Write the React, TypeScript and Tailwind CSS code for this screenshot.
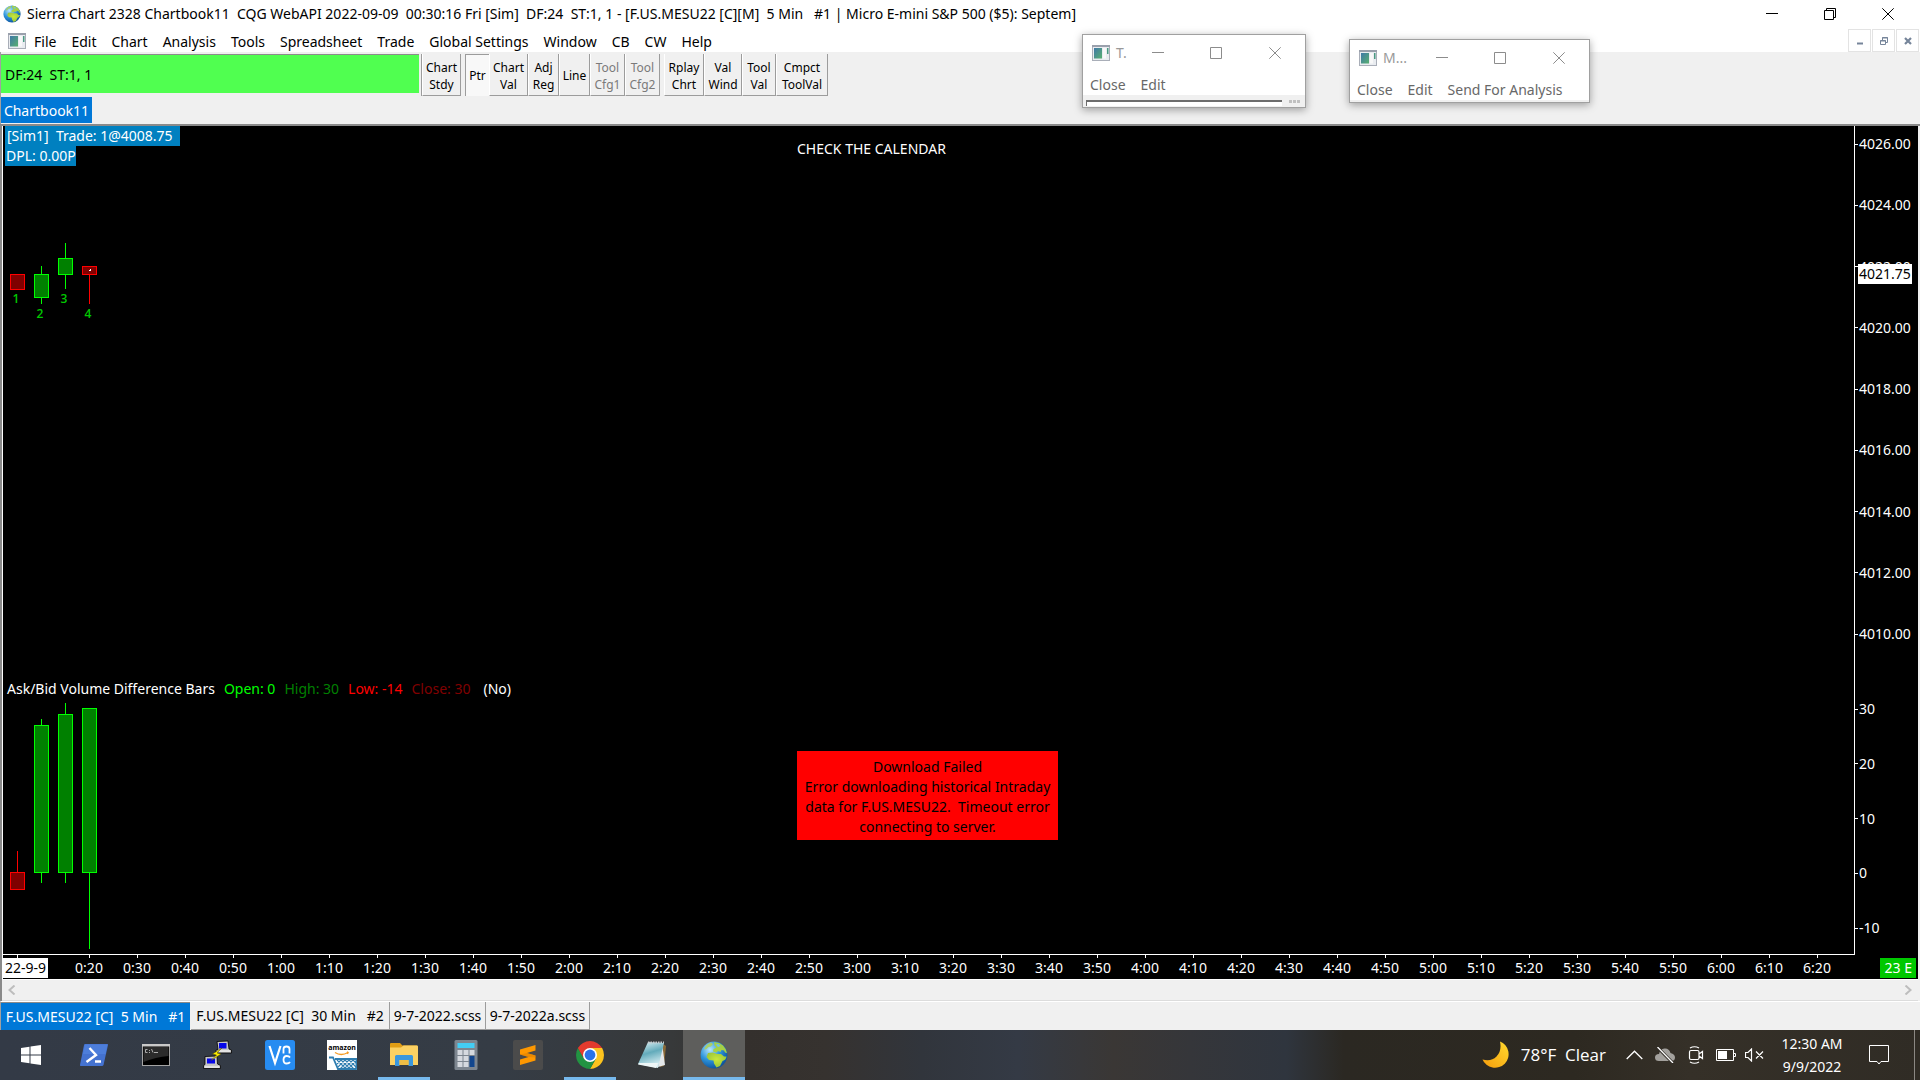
import React from "react";

type Bar = { x: number; top: number; bottom: number; high: number; low: number; up: boolean };

const priceBars: Bar[] = [
  { x: 14, top: 148, bottom: 163, high: 148, low: 163, up: false },
  { x: 38, top: 148, bottom: 171, high: 140, low: 177, up: true },
  { x: 62, top: 132, bottom: 148, high: 117, low: 162, up: true },
  { x: 86, top: 140, bottom: 148, high: 140, low: 177, up: false },
];

const volumeBars: Bar[] = [
  { x: 14, top: 746, bottom: 763, high: 725, low: 763, up: false },
  { x: 38, top: 599, bottom: 746, high: 593, low: 756, up: true },
  { x: 62, top: 588, bottom: 746, high: 577, low: 756, up: true },
  { x: 86, top: 582, bottom: 746, high: 582, low: 822, up: true },
];

const barNumbers = [
  { x: 13, y: 177, n: "1" },
  { x: 37, y: 192, n: "2" },
  { x: 61, y: 177, n: "3" },
  { x: 85, y: 192, n: "4" },
];

const menus = ["File", "Edit", "Chart", "Analysis", "Tools", "Spreadsheet", "Trade", "Global Settings", "Window", "CB", "CW", "Help"];

const prices = ["4026.00", "4024.00", "4022.00", "4020.00", "4018.00", "4016.00", "4014.00", "4012.00", "4010.00"];
const volumes = ["30", "20", "10", "0", "-10"];

const times = Array.from({ length: 37 }, (_, i) => {
  const minutes = 20 + i * 10;
  return `${Math.floor(minutes / 60)}:${String(minutes % 60).padStart(2, "0")}`;
});

function Globe({ className }: { className: string }) {
  return (
    <svg viewBox="0 0 28 28" className={className} aria-hidden="true">
      <defs>
        <radialGradient id="sea" cx="0.35" cy="0.3" r="0.75">
          <stop offset="0" stopColor="#b9e6fb" />
          <stop offset="0.5" stopColor="#2f96dc" />
          <stop offset="1" stopColor="#0b4f9a" />
        </radialGradient>
        <radialGradient id="land" cx="0.5" cy="0.45" r="0.65">
          <stop offset="0" stopColor="#c9e83a" />
          <stop offset="1" stopColor="#93bf3a" />
        </radialGradient>
      </defs>
      <circle cx="14" cy="14" r="13.4" fill="url(#sea)" />
      <path d="M8 3L11 1.500L13 3L11 5.500L8.500 6L6.500 8L4 8.500Q5 5 8 3Z" fill="#a9cf6a" />
      <path d="M14 1.200Q19 0.800 23 4.500Q26.500 8 27 12L25 11.500L24 9.500L21.500 9L20.500 11L18 10L16.500 11.500L13 10.500L13.500 8L16.500 6.500L14.500 4.500Z" fill="#a6d045" />
      <path d="M8 12L13 11.500L17 13L21 13L24 15.500L26.500 15.500Q26 19 22.500 20L20 25L16.500 26.500L14 22.500L13.500 19.500L9 19L6.500 16Z" fill="url(#land)" />
      <path d="M16 3.500L18.500 3L20.500 5L18 6Z" fill="#6fc0e6" />
    </svg>
  );
}

function ChartIcon() {
  return (
    <svg viewBox="0 0 18 16" className="h-4 w-[18px] shrink-0" aria-hidden="true">
      <defs>
        <linearGradient id="pane" x1="0" y1="0" x2="1" y2="1">
          <stop offset="0" stopColor="#3f78a8" />
          <stop offset="1" stopColor="#58b070" />
        </linearGradient>
      </defs>
      <rect x="0.5" y="0.5" width="17" height="15" fill="#e9ecf0" stroke="#a9aeb8" />
      <rect x="0" y="0" width="18" height="2" fill="#9aa0ac" />
      <rect x="2" y="3" width="8" height="10.500" fill="url(#pane)" />
      <rect x="11" y="3" width="3" height="10.500" fill="#f8f8f8" />
      <rect x="15" y="3" width="1.500" height="6" fill="#4b9a82" />
    </svg>
  );
}

function Minus({ className }: { className: string }) {
  return (
    <svg viewBox="0 0 12 12" className={className} aria-hidden="true">
      <path d="M0 5.500H12" stroke="currentColor" fill="none" />
    </svg>
  );
}
function Square({ className }: { className: string }) {
  return (
    <svg viewBox="0 0 12 12" className={className} aria-hidden="true">
      <path d="M0.500 0.500H11.500V11.500H0.500Z" stroke="currentColor" fill="none" />
    </svg>
  );
}
function Restore({ className }: { className: string }) {
  return (
    <svg viewBox="0 0 12 12" className={className} aria-hidden="true">
      <path d="M0.500 2.500H9.500V11.500H0.500ZM2.500 2.500V0.500H11.500V9.500H9.500" stroke="currentColor" fill="none" />
    </svg>
  );
}
function Cross({ className }: { className: string }) {
  return (
    <svg viewBox="0 0 12 12" className={className} aria-hidden="true">
      <path d="M0.300 0.300L11.700 11.700M11.700 0.300L0.300 11.700" stroke="currentColor" fill="none" />
    </svg>
  );
}

function ToolButton({ lines, width, disabled }: { lines: string[]; width: string; disabled?: boolean }) {
  return (
    <button
      type="button"
      disabled={disabled}
      className={`${width} flex shrink-0 flex-col items-center justify-center whitespace-nowrap border-r border-b border-l border-r-[#9c9c9c] border-b-[#9c9c9c] border-l-white bg-[#f0f0f0] pt-[2px] text-xs leading-[17px] ${disabled ? "text-[#7a7a7a]" : "text-black"}`}
    >
      {lines.map((l) => (
        <span key={l}>{l}</span>
      ))}
    </button>
  );
}

function ToolWindow({ title, menu, place, children }: { title: string; menu: string[]; place: string; children?: React.ReactNode }) {
  return (
    <section aria-label={title} className={`${place} absolute z-10 flex flex-col border border-[#a0a0a0] bg-white text-[#686868] shadow-[0_2px_8px_rgba(0,0,0,0.35)]`}>
      <div className="flex h-9 items-center pl-[9px] text-[#8c8c8c]">
        <ChartIcon />
        <span className="ml-[6px] w-[28px] text-[#999]">{title}</span>
        <div className="ml-auto flex">
          <button type="button" aria-label="Minimize" className="flex w-[58px] justify-center"><Minus className="size-3" /></button>
          <button type="button" aria-label="Maximize" className="flex w-[58px] justify-center"><Square className="size-3" /></button>
          <button type="button" aria-label="Close window" className="flex w-[60px] justify-center"><Cross className="size-3" /></button>
        </div>
      </div>
      <div className="flex h-6 items-end gap-[15px] pl-[7px]">
        {menu.map((m) => (
          <button key={m} type="button" className="whitespace-nowrap">{m}</button>
        ))}
      </div>
      {children}
    </section>
  );
}

function Candles({ bars }: { bars: Bar[] }) {
  return (
    <>
      {bars.map((b) => (
        <g key={b.x} stroke={b.up ? "#00ff00" : "#ff0000"} fill={b.up ? "#008000" : "#800000"}>
          <path d={`M${b.x + 0.5} ${b.high}V${b.low + 1}`} />
          <rect x={b.x - 6.5} y={b.top + 0.5} width="14" height={b.bottom - b.top} />
        </g>
      ))}
    </>
  );
}

function AxisLabel({ text }: { text: string }) {
  return (
    <div className="flex h-5 items-center">
      <span className="h-px w-[3px] bg-white" />
      <span className="pl-px leading-5">{text}</span>
    </div>
  );
}

function WindowsIcon() {
  return (
    <svg viewBox="0 0 20 20" className="size-5" aria-hidden="true">
      <path d="M0 3L8.500 1.800V9.500H0ZM9.500 1.600L20 0V9.500H9.500ZM0 10.500H8.500V18.200L0 17ZM9.500 10.500H20V20L9.500 18.400Z" fill="#fff" />
    </svg>
  );
}
function PowerShellIcon() {
  return (
    <svg viewBox="0 0 28 22" className="h-[22px] w-7" aria-hidden="true">
      <path d="M5 0H27.500Q28 0 28 1L23.500 21Q23 22 22 22H0.500Q0 22 0 21L4 1Q4.300 0 5 0Z" fill="#4472d0" />
      <path d="M5 0.500H27.500L25.500 10H3Z" fill="#5487e2" opacity="0.6" />
      <path d="M9.500 4L16 11L6.500 18M15 17.500H21" fill="none" stroke="#fff" strokeWidth="2.400" />
    </svg>
  );
}
function ConsoleIcon() {
  return (
    <svg viewBox="0 0 28 22" className="h-[22px] w-7" aria-hidden="true">
      <rect x="0.500" y="0.500" width="27" height="21" fill="#000" stroke="#a4a4a4" />
      <rect x="0" y="0" width="28" height="2.500" fill="#c9c9c9" />
      <path d="M1.500 3H26.500V12Q14 13 1.500 18Z" fill="#2b2b2b" />
      <path d="M5.500 5.500H3.500V8.500H5.500M7.500 6V7M7.500 8V9M9.500 5L11 8.500M12 8.500H16" fill="none" stroke="#bbb" strokeWidth="0.900" />
    </svg>
  );
}
function PuttyIcon() {
  return (
    <svg viewBox="0 0 30 30" className="size-[30px]" aria-hidden="true">
      <g stroke="#000" strokeWidth="0.800">
        <path d="M14 1.500L25 1L26 9L28.500 10V13H13V10L15 9.500Z" fill="#c6c6c6" />
        <path d="M2 16.500L14 16L14.500 24L17.500 25.500V28.500H0.500V25.500L2 24.500Z" fill="#c6c6c6" />
      </g>
      <path d="M16 3H23.500V8.500H16ZM4 18.500H12V23.500H4Z" fill="#0707e8" />
      <path d="M15 11H27M2 27H16" stroke="#fff" />
      <path d="M19 8L9.500 14L13.500 15L8 20.500L18 14L14 13Z" fill="#ffef00" stroke="#554d00" strokeWidth="0.500" />
    </svg>
  );
}
function VncIcon() {
  return (
    <svg viewBox="0 0 30 30" className="size-[30px]" aria-hidden="true">
      <rect width="30" height="30" rx="2.500" fill="#278cf1" />
      <path d="M4.500 6L10 23L15.500 6" fill="none" stroke="#fff" strokeWidth="2.200" />
      <path d="M18.500 13.500V9Q18.500 6.500 21.500 6.500T24.500 9V13.500M25 17.500Q24 16 21.800 16Q18.500 16 18.500 19.800T21.800 23.500Q24 23.500 25 22" fill="none" stroke="#fff" strokeWidth="1.800" />
    </svg>
  );
}
function AmazonIcon() {
  return (
    <span className="relative block size-[30px] bg-white">
      <svg viewBox="0 0 30 30" className="size-[30px]" aria-hidden="true">
        <path d="M8 12.500Q14 16.500 21 12.500L20 11.800M21 12.500L20.500 14" fill="none" stroke="#f59b23" strokeWidth="1.300" />
        <path d="M2 17.500H6L11 29H29L30 19H8" fill="none" stroke="#2e7db0" strokeWidth="1.800" />
        <path d="M10 20L19 29M14 20L23 29M18 20L27 29M22 20L29 27M26 20L30 24M30 20L21 29M26 20L17 29M22 20L13 29M18 20L11 27M14 20L10 24" stroke="#2e7db0" strokeWidth="1.100" />
      </svg>
      <span className="absolute inset-x-0 top-[3px] text-center font-['Open_Sans'] text-[7px] leading-[10px] font-bold text-black">amazon</span>
    </span>
  );
}
function FolderIcon() {
  return (
    <svg viewBox="0 0 28 24" className="h-6 w-7" aria-hidden="true">
      <path d="M0 1Q0 0 1 0H10L12.500 2.500H27V8H0Z" fill="#e19e15" />
      <path d="M0 4.500H11L13.500 2.500H27Q28 2.500 28 3.500V22H0Z" fill="#fbd162" />
      <path d="M5 23V13.500Q5 12 6.500 12H21.500Q23 12 23 13.500V23H18.500V17H9.500V23Z" fill="#3a97dd" />
      <path d="M9.500 17H18.500V22H9.500Z" fill="#eebd45" />
    </svg>
  );
}
function CalculatorIcon() {
  return (
    <svg viewBox="0 0 24 30" className="h-[30px] w-6" aria-hidden="true">
      <rect x="0.500" width="23" height="30" rx="1.500" fill="#7d8690" />
      <rect x="3.500" y="3" width="17" height="5" fill="#43cdf4" />
      <path d="M3.500 10H8.500V15H3.500ZM9.500 10H14.500V15H9.500ZM15.500 10H20.500V15H15.500ZM3.500 16H8.500V21H3.500ZM9.500 16H14.500V21H9.500ZM3.500 22H8.500V27H3.500ZM9.500 22H14.500V27H9.500Z" fill="#d5d9df" />
      <rect x="15.500" y="16" width="5" height="11" fill="#12468e" />
    </svg>
  );
}
function SublimeIcon() {
  return (
    <svg viewBox="0 0 30 30" className="size-[30px]" aria-hidden="true">
      <rect width="30" height="30" rx="2" fill="#4b4b4b" />
      <path d="M7 9.500L22.500 5V10.500L14 13L22.500 15.500V20.500L7 25V19.500L15.500 17L7 14.500Z" fill="#ff9800" />
      <path d="M7 14.500L14 13L22.500 15.500V17.500L15.500 17Z" fill="#d97c00" opacity="0.500" />
    </svg>
  );
}
function ChromeIcon() {
  return (
    <svg viewBox="0 0 28 28" className="size-7" aria-hidden="true">
      <path d="M14 7H26.120A14 14 0 0 1 14 28L20 17.500Z" fill="#fcc31e" />
      <path d="M1.880 7L8 17.500L14 21L20 17.500L14 28A14 14 0 0 1 1.880 7Z" fill="#229342" />
      <path d="M1.880 7A14 14 0 0 1 26.120 7H14L8 10.500L7.900 17.400Z" fill="#e33b2e" />
      <circle cx="14" cy="14" r="7" fill="#fff" />
      <circle cx="14" cy="14" r="5.400" fill="#2a72e8" />
    </svg>
  );
}
function NotepadIcon() {
  return (
    <svg viewBox="0 0 28 28" className="size-7" aria-hidden="true">
      <defs>
        <linearGradient id="note" x1="0" y1="0" x2="0.300" y2="1">
          <stop offset="0" stopColor="#e4f4f7" />
          <stop offset="0.500" stopColor="#63abbb" />
          <stop offset="1" stopColor="#d8eef3" />
        </linearGradient>
      </defs>
      <path d="M24 2L28 5L26 25L22 26Z" fill="#8a6a38" />
      <path d="M24 2L27 24L20 26Z" fill="#e3e7ea" />
      <path d="M10 1L26 2L20 27L0 23Z" fill="url(#note)" />
      <path d="M20 22L18 27L0 23.500L1 22Z" fill="#eef6f7" />
      <path d="M10 1.500H26" stroke="#c8ccd0" strokeWidth="2" strokeDasharray="1.500 1" />
    </svg>
  );
}

const apps = [
  { name: "Start", icon: <WindowsIcon /> },
  { name: "PowerShell", icon: <PowerShellIcon /> },
  { name: "Command Prompt", icon: <ConsoleIcon /> },
  { name: "PuTTY", icon: <PuttyIcon /> },
  { name: "VNC", icon: <VncIcon /> },
  { name: "Amazon", icon: <AmazonIcon /> },
  { name: "File Explorer", icon: <FolderIcon />, open: true },
  { name: "Calculator", icon: <CalculatorIcon /> },
  { name: "Sublime Text", icon: <SublimeIcon /> },
  { name: "Chrome", icon: <ChromeIcon />, open: true },
  { name: "Notepad", icon: <NotepadIcon /> },
  { name: "Sierra Chart", icon: <Globe className="size-7" />, active: true },
];

function Taskbar() {
  return (
    <footer className="flex h-[50px] shrink-0 bg-[linear-gradient(90deg,#333a46_0%,#353c45_26%,#37393a_35%,#34302d_39%,#36322f_43%,#31353c_48%,#343a45_53%,#3a3735_58%,#35363a_62%,#2f353e_67%,#2b2822_70%,#2d2921_82%,#353028_88%,#302c25_100%)] text-white">
      <nav aria-label="Taskbar" className="flex">
        {apps.map((a) => (
          <button
            key={a.name}
            type="button"
            aria-label={a.name}
            className={`relative flex w-[62px] items-center justify-center first:mr-px ${a.active ? "bg-[#5e5e5c]" : ""}`}
          >
            {a.icon}
            {a.open && <span className="absolute inset-x-[5px] bottom-0 h-[3px] bg-[#76b9ed]" />}
            {a.active && <span className="absolute inset-x-0 bottom-0 h-[3px] bg-[#76b9ed]" />}
          </button>
        ))}
      </nav>
      <div className="ml-auto flex items-center">
        <button type="button" className="flex items-center gap-[11px] font-['Open_Sans'] text-[17px] whitespace-pre">
          <svg viewBox="0 0 28 28" className="size-7" aria-hidden="true">
            <defs>
              <linearGradient id="moon" x1="0" y1="1" x2="1" y2="0">
                <stop offset="0" stopColor="#f59c0c" />
                <stop offset="1" stopColor="#ffd92e" />
              </linearGradient>
            </defs>
            <path d="M18 0.500A13.600 13.600 0 1 1 0.500 18.500Q9 21 14.500 15.500T18 0.500Z" fill="url(#moon)" />
          </svg>
          <span>78°F  Clear</span>
        </button>
        <div className="ml-5 flex items-center">
          <button type="button" aria-label="Show hidden icons">
            <svg viewBox="0 0 17 10" className="h-[10px] w-[17px]" aria-hidden="true"><path d="M0.700 9L8.500 1.200L16.300 9" fill="none" stroke="#fff" strokeWidth="1.300" /></svg>
          </button>
          <button type="button" aria-label="OneDrive" className="ml-3">
            <svg viewBox="0 0 20 16" className="h-4 w-5" aria-hidden="true">
              <path d="M4 14Q0 14 0 10.500T4 7Q5 2 9.500 1.500T15.500 6Q20 7 20 10.500T16 14Z" fill="#a3a19d" />
              <path d="M2 0L18 16" stroke="#302c26" strokeWidth="3" />
              <path d="M2.500 0L18 16" stroke="#fff" strokeWidth="1.300" />
            </svg>
          </button>
          <button type="button" aria-label="Meet now" className="ml-[13px]">
            <svg viewBox="0 0 16 18" className="h-[18px] w-4" aria-hidden="true">
              <path d="M3 4.500H9.500Q11 4.500 11 6V12Q11 13.500 9.500 13.500H3Q1.500 13.500 1.500 12V6Q1.500 4.500 3 4.500ZM11 8L14.500 5.500V12.500L11 10M2 2Q6.500 -0.500 11 2M2 16Q6.500 18.500 11 16" fill="none" stroke="#fff" strokeWidth="1.200" />
            </svg>
          </button>
          <button type="button" aria-label="Battery" className="ml-[12px]">
            <svg viewBox="0 0 20 12" className="h-3 w-5" aria-hidden="true">
              <path d="M0.500 0.500H17.500V11.500H0.500ZM18 4.500H19.500V7.500H18" fill="none" stroke="#fff" />
              <rect x="2" y="2" width="9" height="8" fill="#fff" />
            </svg>
          </button>
          <button type="button" aria-label="Muted" className="ml-[9px]">
            <svg viewBox="0 0 19 14" className="h-[14px] w-[19px]" aria-hidden="true">
              <path d="M0.500 4.500H3L6.500 1V13L3 9.500H0.500ZM11 3.500L18 10.500M18 3.500L11 10.500" fill="none" stroke="#fff" strokeWidth="1.200" />
            </svg>
          </button>
        </div>
        <button type="button" className="ml-[10px] flex w-[76px] flex-col items-center leading-[23px]">
          <span>12:30 AM</span>
          <span>9/9/2022</span>
        </button>
        <button type="button" aria-label="Notifications" className="ml-[19px]">
          <svg viewBox="0 0 20 20" className="size-5" aria-hidden="true"><path d="M0.500 0.500H19.500V16.500H12L10 19L8 16.500H0.500Z" fill="none" stroke="#fff" /></svg>
        </button>
        <span className="ml-[25px] mr-[5px] h-[50px] w-px bg-[#8b8883]" />
      </div>
    </footer>
  );
}

export default function App() {
  return (
    <div className="relative flex h-screen flex-col overflow-hidden bg-[#f0f0f0] font-['Noto_Sans','Open_Sans',sans-serif] text-sm text-black">
      <header className="flex shrink-0 flex-col bg-white">
        <div className="flex h-7 items-center">
          <Globe className="ml-[3px] size-[18px]" />
          <h1 className="ml-[6px] whitespace-pre">{"Sierra Chart 2328 Chartbook11  CQG WebAPI 2022-09-09  00:30:16 Fri [Sim]  DF:24  ST:1, 1 - [F.US.MESU22 [C][M]  5 Min   #1 | Micro E-mini S&P 500 ($5): Septem]"}</h1>
          <div className="ml-auto flex pr-[3px]">
            <button type="button" aria-label="Minimize" className="flex w-[58px] justify-center"><Minus className="size-3" /></button>
            <button type="button" aria-label="Restore" className="flex w-[58px] justify-center"><Restore className="size-3" /></button>
            <button type="button" aria-label="Close" className="flex w-[58px] justify-center"><Cross className="size-3" /></button>
          </div>
        </div>
        <div className="flex h-6 items-end">
          <span className="mb-[3px] ml-2"><ChartIcon /></span>
          <nav aria-label="Menu" className="ml-2 flex gap-[15px]">
            {menus.map((m) => (
              <button key={m} type="button" className="whitespace-nowrap">{m}</button>
            ))}
          </nav>
          <div className="ml-auto flex gap-px pr-px text-[#76859a]">
            <button type="button" aria-label="Minimize chart" className="flex size-[23px] items-center justify-center border border-[#e3e3e3]">
              <svg viewBox="0 0 8 8" className="size-2" aria-hidden="true"><path d="M1 6.500H7" stroke="currentColor" strokeWidth="2" /></svg>
            </button>
            <button type="button" aria-label="Restore chart" className="flex size-[23px] items-center justify-center border border-[#e3e3e3]">
              <svg viewBox="0 0 8 8" className="size-2" aria-hidden="true"><path d="M0.500 3.500H5.500V7.500H0.500ZM0 4H6M2.500 3V0.500H7.500V5.500H6M2 1H8" fill="none" stroke="currentColor" /></svg>
            </button>
            <button type="button" aria-label="Close chart" className="flex size-[23px] items-center justify-center border border-[#e3e3e3]">
              <svg viewBox="0 0 8 8" className="size-2" aria-hidden="true"><path d="M1 1L7 7M7 1L1 7" stroke="currentColor" strokeWidth="2.200" /></svg>
            </button>
          </div>
        </div>
      </header>

      <div className="flex h-[45px] shrink-0 border-l border-[#a0a0a0] pt-[2px] pb-px">
        <div className="flex h-[39px] w-[418px] shrink-0 items-center border-t border-[#8c8c8c] bg-[#50ff50] pt-px pl-1 whitespace-pre">DF:24  ST:1, 1</div>
        <div className="ml-[2px] flex border-l border-[#9c9c9c]">
          <ToolButton lines={["Chart", "Stdy"]} width="w-[39px]" />
        </div>
        <button type="button" aria-pressed="true" className="ml-1 w-6 shrink-0 border-t border-l border-[#9c9c9c] bg-[#f8f8f8] text-xs">Ptr</button>
        <ToolButton lines={["Chart", "Val"]} width="w-[39px]" />
        <ToolButton lines={["Adj", "Reg"]} width="w-[31px]" />
        <ToolButton lines={["Line"]} width="w-[31px]" />
        <ToolButton lines={["Tool", "Cfg1"]} width="w-[35px]" disabled />
        <ToolButton lines={["Tool", "Cfg2"]} width="w-[35px]" disabled />
        <div className="ml-1 flex">
          <ToolButton lines={["Rplay", "Chrt"]} width="w-10" />
          <ToolButton lines={["Val", "Wind"]} width="w-[38px]" />
          <ToolButton lines={["Tool", "Val"]} width="w-[34px]" />
          <ToolButton lines={["Cmpct", "ToolVal"]} width="w-[52px]" />
        </div>
      </div>
      <div className="flex h-[27px] shrink-0 border-l border-[#a0a0a0] pb-px">
        <button type="button" className="w-[91px] bg-[#0078d7] pt-px text-white">Chartbook11</button>
      </div>

      <main className="flex min-h-0 flex-1 flex-col border-t-2 border-l-2 border-[#8a8a8a] pr-[2px]">
        <div className="relative flex min-h-0 flex-1 flex-col overflow-hidden border-l border-white bg-black text-white">
          <svg className="absolute inset-0 size-full" aria-label="Price and volume candles">
            <Candles bars={priceBars} />
            <Candles bars={volumeBars} />
            <path d="M86 144.500H88M87.500 143V145" stroke="#fff" />
            {barNumbers.map((b) => (
              <text key={b.n} x={b.x} y={b.y} textAnchor="middle" className="fill-[#00c800] font-['Open_Sans'] text-xs font-semibold">{b.n}</text>
            ))}
          </svg>
          <div className="flex min-h-0 flex-1">
            <div className="relative flex-1 border-b border-white">
              <div className="flex flex-col items-start leading-5 whitespace-pre">
                <span className="ml-[2px] bg-[#0080c0] pr-[7px] pl-[2px]">[Sim1]  Trade: 1@4008.75</span>
                <span className="ml-[2px] bg-[#0080c0] pl-px">DPL: 0.00P</span>
              </div>
              <p className="absolute top-[13px] left-[794px] leading-5">CHECK THE CALENDAR</p>
              <p className="absolute top-[553px] left-1 flex gap-[9px] leading-5 whitespace-pre">
                <span>Ask/Bid Volume Difference Bars</span>
                <span className="text-[#00ff00]">Open: 0</span>
                <span className="text-[#008000]">High: 30</span>
                <span className="text-[#ff0000]">Low: -14</span>
                <span className="text-[#800000]">Close: 30</span>
                <span className="pl-1">(No)</span>
              </p>
              <div role="alert" className="absolute top-[625px] left-[794px] w-[261px] bg-[#ff0000] pt-[6px] pb-[3px] text-center leading-5 whitespace-pre text-black">
                <p>Download Failed</p>
                <p>Error downloading historical Intraday</p>
                <p>data for F.US.MESU22.  Timeout error</p>
                <p>connecting to server.</p>
              </div>
            </div>
            <div className="relative flex w-16 flex-col border-l border-white">
              <div className="flex flex-1 flex-col justify-between pt-2 pb-[35px]">
                {prices.map((p) => <AxisLabel key={p} text={p} />)}
              </div>
              <div className="flex h-[276px] shrink-0 flex-col justify-between pt-5 pb-[17px]">
                {volumes.map((v) => <AxisLabel key={v} text={v} />)}
              </div>
              <span className="absolute top-[138px] left-[3px] bg-white px-px leading-5 text-black">4021.75</span>
            </div>
          </div>
          <div className="flex h-6 shrink-0 items-start">
            <div className="flex w-[62px] shrink-0 flex-col">
              <span className="ml-[14px] h-[3px] w-px bg-white" />
              <span className="w-[45px] bg-white text-center leading-5 text-black">22-9-9</span>
            </div>
            {times.map((t) => (
              <div key={t} className="flex w-12 shrink-0 flex-col items-center">
                <span className="h-[3px] w-px bg-white" />
                <span className="leading-5">{t}</span>
              </div>
            ))}
            <span className="mt-[3px] mr-[2px] ml-auto bg-[#00c800] pr-1 pl-[5px] leading-5">23 E</span>
          </div>
        </div>
        <div className="flex h-[22px] shrink-0 items-center justify-between border-t border-b border-t-white border-b-[#dcdcdc] px-[6px] text-[#bdbdbd]">
          <button type="button" aria-label="Scroll left">
            <svg viewBox="0 0 8 10" className="h-[10px] w-2" aria-hidden="true"><path d="M6.500 0.500L1.500 5L6.500 9.500" fill="none" stroke="currentColor" strokeWidth="2" /></svg>
          </button>
          <button type="button" aria-label="Scroll right">
            <svg viewBox="0 0 8 10" className="h-[10px] w-2" aria-hidden="true"><path d="M1.500 0.500L6.500 5L1.500 9.500" fill="none" stroke="currentColor" strokeWidth="2" /></svg>
          </button>
        </div>
      </main>

      <div role="tablist" className="flex h-[29px] shrink-0 border-t border-l border-t-white border-l-[#a0a0a0] whitespace-pre">
        <button type="button" role="tab" aria-selected="true" className="w-[189px] border-t border-[#8a8a8a] bg-[#0078d7] text-white">{"F.US.MESU22 [C]  5 Min   #1"}</button>
        <button type="button" role="tab" aria-selected="false" className="ml-px w-[199px] border-r border-b border-[#9c9c9c] pt-px">{"F.US.MESU22 [C]  30 Min   #2"}</button>
        <button type="button" role="tab" aria-selected="false" className="w-24 border-r border-b border-[#9c9c9c] pt-px">9-7-2022.scss</button>
        <button type="button" role="tab" aria-selected="false" className="w-[104px] border-r border-b border-[#9c9c9c] pt-px">9-7-2022a.scss</button>
      </div>

      <Taskbar />

      <ToolWindow title="T." menu={["Close", "Edit"]} place="top-[34px] left-[1082px] w-[224px]">
        <div className="flex h-3 items-end gap-[7px] bg-[#f0f0f0] pl-[3px]">
          <span className="mb-px h-[6px] w-[196px] border-t-2 border-l border-[#6c6c6c] bg-white" />
          <span className="mb-1 flex gap-px">
            <span className="size-[3px] bg-[#c0c0c0]" />
            <span className="size-[3px] bg-[#c0c0c0]" />
            <span className="size-[3px] bg-[#c0c0c0]" />
          </span>
        </div>
      </ToolWindow>
      <ToolWindow title="M..." menu={["Close", "Edit", "Send For Analysis"]} place="top-[39px] left-[1349px] w-[241px]">
        <div className="h-[2px] bg-[#f0f0f0]" />
      </ToolWindow>
    </div>
  );
}
